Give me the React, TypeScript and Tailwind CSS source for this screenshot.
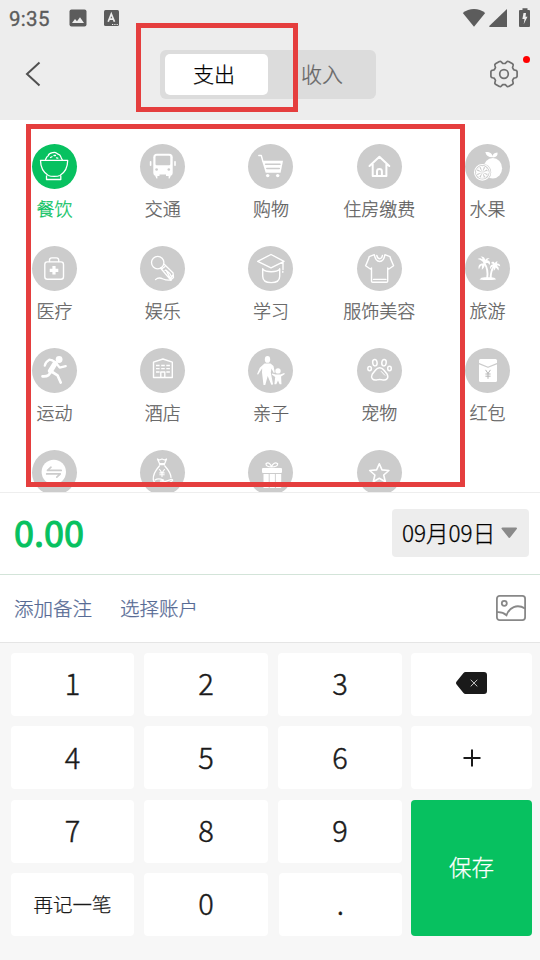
import type { ReactNode } from "react";

const G = "#cccccc";

const icons: Record<string, ReactNode> = {
  food: (
    <g strokeWidth="1.3">
      <path d="M8.5 16.3h27.2c0 7-2.9 12.2-7.7 15.2-2.8 1.2-9 1.2-11.7 0C11.500 28.500 8.500 23.300 8.500 16.300Z" />
      <path d="M14.500 32v3.500h14.300V32M13.500 15.500c1-1.500 1-3 2.500-3.500 1-3.500 4-3 5.900-3.600 2.500-.3 3 1.400 4.800 2 2.600.7 1.600 3.200 3.500 5.100" />
      <path d="M18.500 13.500l1.500-.8M22 11.500h1.500M24.500 13.800l1.300.4" />
    </g>
  ),
  bus: (
    <g stroke="none">
      <rect x="13.300" y="9.700" width="19.400" height="22.300" rx="3.500" fill="white" />
      <path d="M15 31.500h2.400v3h-1zM28.600 31.500H31l-1.400 3h-1z" fill="white" />
      <rect x="9.800" y="17" width="1.600" height="5" rx=".8" fill="white" />
      <rect x="34.200" y="17" width="1.600" height="5" rx=".8" fill="white" />
      <rect x="15.500" y="11.800" width="14.800" height="9.500" rx="1.200" fill={G} />
      <circle cx="16.600" cy="25.500" r="1.300" fill={G} />
      <circle cx="28.800" cy="25.500" r="1.300" fill={G} />
      <path d="M19.500 30.500h6.500v1.600h-6.500z" fill={G} />
    </g>
  ),
  cart: (
    <g strokeWidth="1.400">
      <path d="M10.800 11.500h2.500l1.400 5.200" />
      <path d="M14 16.700h21l-2.400 12H17.700z" fill="white" stroke="none" />
      <path d="M17.600 20.300h14.400M18.800 24.600h12.500" stroke={G} strokeWidth="1.500" />
      <circle cx="19.700" cy="31.600" r="1.700" fill="white" stroke="none" />
      <circle cx="29.700" cy="31.600" r="1.700" fill="white" stroke="none" />
    </g>
  ),
  house: (
    <g strokeWidth="2">
      <path d="M12.500 22l9.900-9.200L32.300 22M15.700 20v12h13.700V20M20 32v-4.500a2.400 2.400 0 0 1 4.900 0V32" />
    </g>
  ),
  fruit: (
    <g>
      <ellipse cx="27.800" cy="24.200" rx="9.300" ry="10.200" fill="white" stroke="none" />
      <path d="M20.300 8c4-.5 7 1 7.700 5.300-4 .3-6.800-1.300-7.700-5.300ZM32.500 8.500c-3.800.3-5.300 2.300-4.500 4.900 3.500-.1 5-1.700 4.500-4.900Z" fill="white" stroke="none" />
      <circle cx="17.300" cy="28.300" r="8.900" fill={G} stroke="none" />
      <circle cx="17.300" cy="28.300" r="7.800" strokeWidth="1.100" />
      <circle cx="17.300" cy="28.300" r="6" strokeWidth="1" />
      <path d="M17.300 28.300l-1.600-5.500h3.200zM17.300 28.300l-1.600 5.500h3.200zM17.300 28.300l-5.500-1.600v3.200zM17.300 28.300l5.500-1.600v3.200zM17.300 28.300l-4.800-3 1.800-1.800zM17.300 28.300l4.800-3-1.800-1.800zM17.300 28.300l-4.800 3 1.800 1.800zM17.300 28.300l4.800 3-1.800 1.800z" fill="white" stroke="none" />
    </g>
  ),
  medical: (
    <g strokeWidth="1.400">
      <rect x="12.800" y="15.900" width="18.700" height="17.400" rx="2.500" />
      <path d="M17.500 15.500v-1.400q0-2.200 2.200-2.200h4.800q2.200 0 2.200 2.200v1.400" />
      <path d="M22 20v8.600M17.700 24.300h8.600" strokeWidth="3.200" strokeLinecap="butt" />
    </g>
  ),
  mic: (
    <g strokeWidth="1.300">
      <circle cx="17.700" cy="16.600" r="6.200" />
      <path d="M20.500 22l9.800 11.500M24.200 18.300l8.900 8.700.4 4.500-2.800 2.600M22.300 22.500l2.400-1.800M30.400 32.500l-4.300-8.300 3.700 3.300 1.500 3M33 29l-3 4M25 24.500l.7-.4" />
      <path d="M15.500 33.600c2.600-2.500 5.300-1.700 7.600-.6 2.100 1 4.100 1.600 8.200 1" />
    </g>
  ),
  study: (
    <g strokeWidth="1.400">
      <path d="M23 8.500l13 6.800-13 6.600-13.300-6.500zM35 16v7.500M34.800 25.500v.7M14.700 22.800v7.400q0 6.400 8.500 6.400t8.500-6.400v-7.400" />
      <path d="M15 23.500q2 2.200 8.200 2.200t8.300-2.200" />
    </g>
  ),
  shirt: (
    <g strokeWidth="1.400">
      <path d="M17.300 8.700l-5.100 2q-.8 2.800-3.600 9l4.700 3.300 1.200-1v13.200q0 1.100 1.200 1.100h13.800q1.200 0 1.200-1.100V22l1.200 1 4.700-3.300q-2.800-6.200-3.600-9l-5.100-2M17.300 8.700q1.200 6.800 5.400 6.800t5.200-6.800M19.800 9.500q.7 3.200 2.900 3.200t2.700-3.200M16.500 33.400h12.500" />
    </g>
  ),
  palm: (
    <g>
      <path d="M14.500 33.500q1.500-2.300 5.500-2.200h6q4 0 5 2.200-8 1-16.500 0z" fill="white" stroke="none" />
      <path d="M22.200 32q1.300-9-3-15M25.700 32q0-7 3-11.500" strokeWidth="1.900" />
      <path d="M19 17.500c-1.500-3-4-3.800-6.500-4.500 2-1.500 4.300-.7 5 .5-.2-2-1-2.500-2-3 3.200-.2 4.500 1.500 4.700 3.600 1-2 2.800-2.600 4.600-2-1.500.9-2.500 1.400-2.300 2.300 2-.2 3 1.500 2.500 4.600-2-2.600-3.600-2.500-5-1-.4 3-1.500 4.500-3.200 5.700.2-2.400 0-3.200.2-4.500-1.600.9-2.400 2-3 4.300-1.500-3.700.5-6.500 5-6Z" fill="white" stroke="none" />
      <path d="M29 20.500c-2.300-.4-3 1-3.700 2.800-.8-3 .5-4.800 2.800-4.800-.5-1-1.100-1.200-2.100-1.300 1.300-2.200 3.200-1.400 3.800.1.700-1.600 1.600-1.900 3-1.700-.7.800-.9 1.200-.8 1.800 2.200-.1 3.200 1 3.200 3-1.500-1.100-2.600-1.200-3.400-.6 2 1.200 2.400 2.800 1.600 4.800-1-2-2-2.800-2.800-3.200-.2 1.700-.9 2.800-2 3.300Z" fill="white" stroke="none" />
    </g>
  ),
  run: (
    <g>
      <circle cx="27.100" cy="11.500" r="3.400" fill="white" stroke="none" />
      <path d="M12.800 17.700q.5-3.700 4.500-6 3 .1 6.200 2.600l4.200 5.300 6-1.500" strokeWidth="2.300" />
      <path d="M23 15.500l-4.500 7.300" strokeWidth="5.200" />
      <path d="M19.500 23.500l6 3.800 3.200 7.200M18.500 23.500q-1 5.500-8 4.900" strokeWidth="2.700" />
    </g>
  ),
  hotel: (
    <g strokeWidth="1.400">
      <path d="M13.500 14.200l9.400-3.200 9.400 3.200v15.300H13.500z" />
      <path d="M16 17.500h3.600M21.200 17.500h3.600M26.300 17.500h3.600M16 20.600h3.600M21.200 20.600h3.600M26.300 20.600h3.600M16 24h3.600M26.300 24h3.600" strokeLinecap="butt" />
      <path d="M20.800 29v-5h4v5" />
    </g>
  ),
  family: (
    <g fill="white" stroke="none">
      <ellipse cx="19.500" cy="11.400" rx="2.700" ry="3.400" />
      <path d="M16.500 15.500h6l3 2.600 1.300 6.300-1 .5-2.400-4.400-.6 4 2.300 11.900-1.800.3L19.700 28 17.300 37h-1.800L14 24.500l.2-4.200-4.200 6.500-.9-.8 2.700-6.200Z" />
      <circle cx="30" cy="22.900" r="2.700" />
      <path d="M24.200 25.500l3.600.9h4.600l3.900-1.500.5 1.100-3.700 2.400.4 7.800h-1.900L30 32.500l-1.700 3.700h-1.900l.8-7.300-3.400-2.300Z" />
    </g>
  ),
  paw: (
    <g strokeWidth="1.500">
      <ellipse cx="17.900" cy="14.700" rx="2.200" ry="3.200" transform="rotate(-8 17.900 14.700)" />
      <ellipse cx="27" cy="14.700" rx="2.200" ry="3.200" transform="rotate(8 27 14.700)" />
      <ellipse cx="12.600" cy="20.600" rx="1.800" ry="2.200" />
      <ellipse cx="32.500" cy="20.500" rx="1.800" ry="2.200" />
      <path d="M18.600 22c2.200-3 6-3 8.200 0l3.400 4.300c1.800 3.700-.8 6.400-4.500 5.600q-3-1-6 0c-4 .8-6.200-2-4.500-5.600Z" />
      <path d="M24.300 23.500l3.500 3.700" strokeWidth="1" />
    </g>
  ),
  envelope: (
    <g>
      <rect x="14" y="11" width="18" height="23" rx="1.500" fill="white" stroke="none" />
      <path d="M14 15.600l9 3.700 9-3.700" stroke={G} strokeWidth="1.200" />
      <path d="M20.800 22.200l2.200 3.300 2.200-3.300M23 25.500v4.900M20.800 26h4.400M20.800 28.200h4.400" stroke="#b5b5b5" strokeWidth="1" />
    </g>
  ),
  transfer: (
    <g>
      <circle cx="21.800" cy="22" r="12.200" fill="white" stroke="none" />
      <path d="M29.200 20.400H15.500l3.500-3.200M14.700 23.900h13.600l-3.500 3.200" stroke={G} strokeWidth="1.700" />
    </g>
  ),
  money: (
    <g strokeWidth="1.300">
      <path d="M17.500 9l2 1 2.500-1 2.500 1 2-1-1.800 4.600h-5.200ZM19.500 14.700h5M19.300 16c-3.500 4-6.500 8.500-6 13.500.1 1.200.6 2 1.200 2.500M24.900 16c3.500 4 6 8 6.100 11.500" />
      <path d="M19.600 19.500l2.400 3.500 2.400-3.500M22 23v3.500M19.800 22.900h4.400M19.800 24.800h4.400" strokeWidth="1.100" />
      <path d="M15 30c3-2 6-1 8.500 0l-3 1.200 5 .2 6-2q1.500 0 1 1l-6 4.500H15" />
    </g>
  ),
  gift: (
    <g>
      <path d="M23.500 17c-3 0-5.500-1-5.500-3.200 2.500-2.200 4.700.3 5.500 3.200.8-3 3.500-5.300 6.200-3.200 0 2.200-2.700 3.200-6.200 3.200Z" strokeWidth="1.200" />
      <rect x="14" y="18" width="20" height="5" rx="1" fill="white" stroke="none" />
      <path d="M15.500 24h17.700v14H15.500z" fill="white" stroke="none" />
      <path d="M21.200 24v14M27.400 24v14" stroke={G} strokeWidth=".9" />
    </g>
  ),
  star: (
    <path d="M22.300 13.800l2.700 6.100 6.900.6-5.200 4.500 1.600 6.700-6-3.500-6 3.500 1.600-6.700-5.200-4.500 6.900-.6z" strokeWidth="1.600" />
  ),
};

const categories: [string, string][] = [
  ["food", "餐饮"],
  ["bus", "交通"],
  ["cart", "购物"],
  ["house", "住房缴费"],
  ["fruit", "水果"],
  ["medical", "医疗"],
  ["mic", "娱乐"],
  ["study", "学习"],
  ["shirt", "服饰美容"],
  ["palm", "旅游"],
  ["run", "运动"],
  ["hotel", "酒店"],
  ["family", "亲子"],
  ["paw", "宠物"],
  ["envelope", "红包"],
  ["transfer", ""],
  ["money", ""],
  ["gift", ""],
  ["star", ""],
];

function Category({ icon, label, active }: { icon: string; label: string; active: boolean }) {
  return (
    <div className="flex h-[102px] flex-col items-center">
      <svg
        className={active ? "size-[45px] shrink-0 rounded-full bg-[#07c160]" : "size-[45px] shrink-0 rounded-full bg-[#cccccc]"}
        viewBox="0 0 45 45"
        fill="none"
        stroke="white"
        strokeLinecap="round"
        strokeLinejoin="round"
      >
        {icons[icon]}
      </svg>
      <span className={active ? "mt-[6px] text-[18px] leading-[26px] text-[#07c160]" : "mt-[6px] text-[18px] leading-[26px] text-[#606060]"}>
        {label}
      </span>
    </div>
  );
}

function gearPoints() {
  const pts: string[] = [];
  for (let k = 0; k < 6; k++) {
    for (const [d, r] of [[-23, 10.700], [-18, 12.100], [-15, 13], [-10, 13.300], [10, 13.300], [15, 13], [18, 12.100], [23, 10.700], [30, 10.500]]) {
      const a = ((k * 60 + d) * Math.PI) / 180;
      pts.push(`${(15 + r * Math.cos(a)).toFixed(2)},${(15 + r * Math.sin(a)).toFixed(2)}`);
    }
  }
  return pts.join(" ");
}

function StatusBar() {
  return (
    <div className="flex h-9 items-center pl-[9px] pr-[10px] text-[#5c5c5c]">
      <span className="w-[60px] pt-[2px] font-[Roboto,sans-serif] text-[20.500px] font-normal tracking-[0.300px] [-webkit-text-stroke:0.350px]">9:35</span>
      <svg className="size-[18px]" viewBox="0 0 18 18">
        <rect x=".5" y=".5" width="17" height="17" rx="2" fill="#5c5c5c" />
        <path d="M3 14l3-4 2 2.200 3-4 4 5.800z" fill="#ededed" />
      </svg>
      <svg className="ml-[17px] h-[16px] w-[15px]" viewBox="0 0 15 16">
        <rect width="15" height="16" rx="1.500" fill="#5c5c5c" />
        <path d="M4.200 11.800L7.300 4l3.200 7.800M5.400 9.200h4" stroke="#ededed" strokeWidth="1.700" fill="none" />
        <path d="M8 14.500h1.200M10.300 14.500h1.200M12.600 14.500h1.200" stroke="#ededed" strokeWidth="1.100" />
      </svg>
      <svg className="ml-auto h-5 w-[68px]" viewBox="0 0 68 20">
        <path d="M.8 5C7-.2 17-.2 23.200 5L12 18.800z" fill="#5c5c5c" />
        <path d="M45 1v18H28q-1.500 0-.5-1.200z" fill="#5c5c5c" />
        <path d="M60.500.200h5V2H67q1 0 1 1v15q0 1-1 1h-9q-1 0-1-1V3q0-1 1-1h2.500z" fill="#5c5c5c" />
        <path d="M61.500 5L60.400 11h2.100l-.8 5.200 3.800-7.500h-2l.5-3.700z" fill="#ededed" />
      </svg>
    </div>
  );
}

const keyBase = "flex items-center justify-center rounded-[4px] bg-white pb-[3px] text-[29px] text-[#1a1a1a] [-webkit-text-stroke:0.450px]";

export default function App() {
  return (
    <div className="relative flex h-[960px] w-[540px] flex-col overflow-hidden bg-white font-['Noto_Sans_CJK_SC',sans-serif] font-light [-webkit-text-stroke:0.250px]">
      <header className="h-[120px] shrink-0 bg-[#ededed]">
        <StatusBar />
        <div className="mt-[14px] flex h-[49px] items-center">
          <svg className="mb-px ml-[25px] h-[26px] w-4" viewBox="0 0 16 26">
            <path d="M14.500 1.500L2 13l12.500 11.500" fill="none" stroke="#505050" strokeWidth="2" />
          </svg>
          <div className="ml-[119px] flex h-[49px] w-[216px] items-center rounded-[6px] bg-[#dcdcdc] pl-[5px] text-[21px]">
            <div className="flex h-[41px] w-[103px] items-center justify-center rounded-[5px] bg-white pr-[5px] pb-px text-black">支出</div>
            <div className="flex w-[108px] justify-center pb-px text-[#666]"><span>收入</span></div>
          </div>
          <div className="relative mb-px ml-auto mr-[21px] size-[30px]">
            <svg className="size-[30px]" viewBox="0 0 30 30" fill="none" stroke="#707070" strokeWidth="1.700" strokeLinejoin="round">
              <polygon points={gearPoints()} />
              <circle cx="15" cy="15" r="4.300" />
            </svg>
            <span className="absolute -right-[11px] -top-[3px] size-[7px] rounded-full bg-[#ff0000]" />
          </div>
        </div>
      </header>

      <section className="h-[372px] shrink-0 overflow-hidden pt-6">
        <div className="grid grid-cols-[repeat(5,108.250px)] pl-[0.300px]">
          {categories.map(([icon, label]) => (
            <Category key={icon} icon={icon} label={label} active={icon === "food"} />
          ))}
        </div>
      </section>

      <section className="flex h-[83px] shrink-0 items-center justify-between border-b border-t border-b-[#d3e4d9] border-t-[#eeeeee] pb-[2px] pl-[14px] pr-[11px]">
        <span className="pb-[3px] text-[36px] font-normal text-[#07c160] [-webkit-text-stroke:1.100px_#07c160]">0.00</span>
        <button className="flex h-12 w-[137px] items-center rounded-[4px] bg-[#ededed] pl-[10px] text-[22.500px] text-black">
          <span>09月09日</span>
          <svg className="ml-[6px] h-[12px] w-[17px] shrink-0" viewBox="0 0 17 12">
            <path d="M1.500 1.500h13.500L8.300 10z" fill="#8a8a8a" stroke="#8a8a8a" strokeWidth="2" strokeLinejoin="round" />
          </svg>
        </button>
      </section>

      <section className="flex h-[68px] shrink-0 items-center border-b border-[#e5e5e5] pb-[2px] pl-[14px] pr-[14px] text-[19.500px] text-[#576b95]">
        <span>添加备注</span>
        <span className="ml-[28px]">选择账户</span>
        <svg className="ml-auto h-[26px] w-[30px]" viewBox="0 0 30 26" fill="none" stroke="#888" strokeWidth="1.800">
          <rect x=".9" y=".9" width="28.200" height="24.200" rx="2.800" />
          <circle cx="8.300" cy="8.300" r="2.500" />
          <path d="M1 17.200q5.500-.5 9.500 3C13 12.500 21 8.500 29 13.500" />
        </svg>
      </section>

      <section className="grid grow grid-cols-[123px_124px_124px_121px] grid-rows-[63px_63px_63px_63px] gap-y-[10.400px] bg-[#f7f7f7] pl-[11px] pt-[10px]">
        <div className={keyBase}>1</div>
        <div className={`${keyBase} ml-[10px] -mr-[10px]`}>2</div>
        <div className={`${keyBase} ml-5 -mr-5`}>3</div>
        <div className={`${keyBase} ml-[29px] -mr-[29px]`}>
          <svg className="mb-px h-[22px] w-[31px]" viewBox="0 0 31 22">
            <path d="M9.500 0H28q3 0 3 3v16q0 3-3 3H9.500q-1.200 0-2-1L.6 12.500q-1.200-1.500 0-3L7.500 1q.8-1 2-1z" fill="#1a1a1a" />
            <path d="M14.700 7.800l6.600 6.600M21.300 7.800l-6.600 6.600" stroke="#ccc" strokeWidth="1" />
          </svg>
        </div>
        <div className={keyBase}>4</div>
        <div className={`${keyBase} ml-[10px] -mr-[10px]`}>5</div>
        <div className={`${keyBase} ml-5 -mr-5`}>6</div>
        <div className={`${keyBase} ml-[29px] -mr-[29px]`}>
          <svg className="mt-[3px] size-[18px]" viewBox="0 0 18 18">
            <path d="M9 .500v17M.500 9h17" stroke="#1a1a1a" strokeWidth="2" />
          </svg>
        </div>
        <div className={keyBase}>7</div>
        <div className={`${keyBase} ml-[10px] -mr-[10px]`}>8</div>
        <div className={`${keyBase} ml-5 -mr-5`}>9</div>
        <div className="row-span-2 -mr-[29px] ml-[29px] flex items-center justify-center rounded-[4px] bg-[#07c160] pb-[2px] text-[22.500px] text-white">保存</div>
        <div className="flex items-center justify-center rounded-[4px] bg-white pb-[2px] text-[19.500px] text-[#1a1a1a]">再记一笔</div>
        <div className={`${keyBase} ml-[10px] -mr-[10px]`}>0</div>
        <div className={`${keyBase} ml-[21px] -mr-5`}>.</div>
      </section>

      <div className="pointer-events-none absolute left-[136px] top-[23px] h-[89px] w-[162px] border-[5px] border-[#e53e3e]" />
      <div className="pointer-events-none absolute left-[26px] top-[124px] h-[363px] w-[438.500px] border-[5px] border-[#e53e3e]" />
    </div>
  );
}
